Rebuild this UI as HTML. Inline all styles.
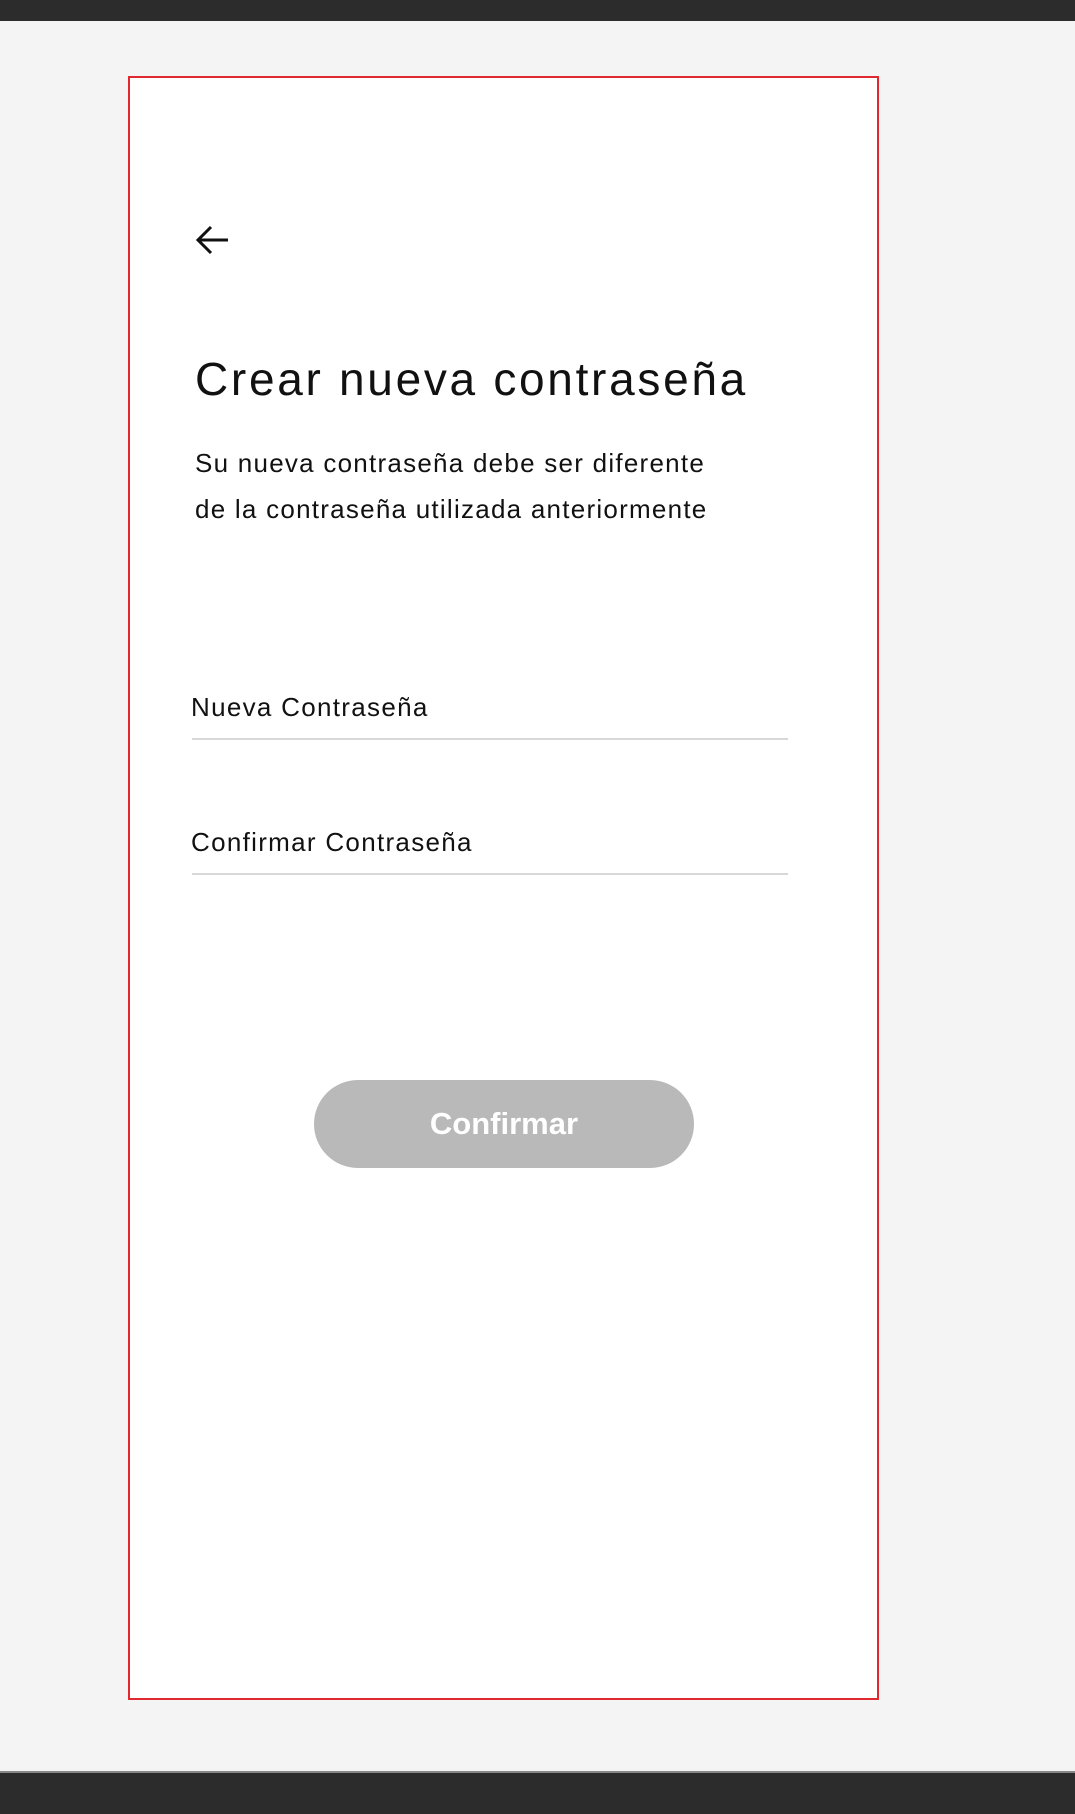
<!DOCTYPE html>
<html><head><meta charset="utf-8"><style>
body{margin:0;width:1075px;height:1812px;background:#f4f4f4;position:relative;overflow:hidden;font-family:"Liberation Sans",sans-serif;color:#111}
.bar{position:absolute;left:0;width:1075px;background:#2c2c2c}
.frame{position:absolute;left:128px;top:76px;width:747px;height:1620px;border:2px solid #e0282e;background:#fff}
.t{position:absolute;white-space:nowrap}
.line{position:absolute;left:192px;width:596px;height:2px;background:#d8d8d8}
.btn{position:absolute;left:314px;top:1080px;width:380px;height:88px;border-radius:44px;background:#b9b9b9;color:#fff;font-weight:bold;font-size:31px;text-align:center;line-height:88px}
</style></head><body>
<div class="bar" style="top:0;height:21px"></div>
<div class="bar" style="top:1771px;height:41px;border-top:2px solid #888"></div>
<div class="frame"></div>
<svg style="position:absolute;left:195px;top:224px" width="36" height="32" viewBox="0 0 36 32"><path d="M3 16H33M16 3L3 16L16 29" fill="none" stroke="#111" stroke-width="3"/></svg>
<div class="t" style="left:195px;top:352px;font-size:46px;letter-spacing:2.7px">Crear nueva contraseña</div>
<div class="t" style="left:195px;top:448px;font-size:26px;letter-spacing:1.25px">Su nueva contraseña debe ser diferente</div>
<div class="t" style="left:195px;top:494px;font-size:26px;letter-spacing:1.25px">de la contraseña utilizada anteriormente</div>
<div class="t" style="left:191px;top:692px;font-size:26px;letter-spacing:1.3px">Nueva Contraseña</div>
<div class="line" style="top:738px"></div>
<div class="t" style="left:191px;top:827px;font-size:26px;letter-spacing:1.3px">Confirmar Contraseña</div>
<div class="line" style="top:873px"></div>
<div class="btn">Confirmar</div>
</body></html>
